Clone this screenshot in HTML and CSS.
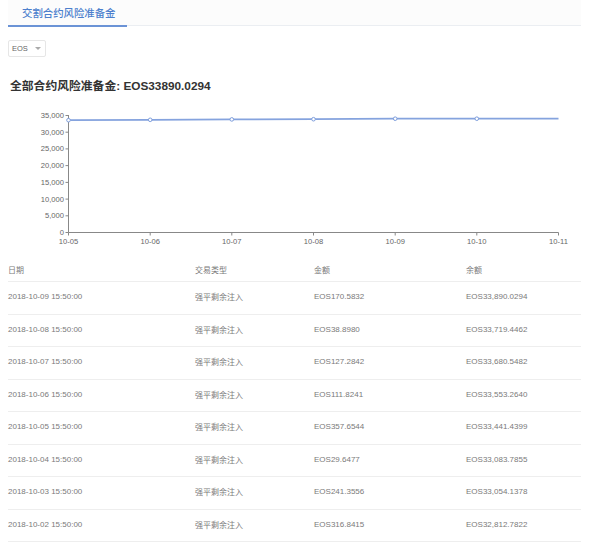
FILE: index.html
```html
<!DOCTYPE html>
<html>
<head>
<meta charset="utf-8">
<link rel="stylesheet" href="styles.css">
</head>
<body>
<div class="tabs">
  <div class="tab active">交割合约风险准备金</div>
</div>
<div class="select">
  <span>EOS</span>
  <span class="caret"></span>
</div>
<h2 class="title">全部合约风险准备金: EOS33890.0294</h2>
<svg class="chart" width="573" height="154" viewBox="0 -4 573 154">
  <g class="ylabels">
    <text x="56" y="18">35,000</text>
    <text x="56" y="34.7">30,000</text>
    <text x="56" y="51.4">25,000</text>
    <text x="56" y="68.1">20,000</text>
    <text x="56" y="84.9">15,000</text>
    <text x="56" y="101.6">10,000</text>
    <text x="56" y="118.3">5,000</text>
    <text x="56" y="135">0</text>
  </g>
  <g class="axis">
    <line x1="60.5" y1="15" x2="60.5" y2="132.5"/>
    <line x1="60.5" y1="132.5" x2="550.5" y2="132.5"/>
    <line x1="57.5" y1="15.5" x2="60.5" y2="15.5"/>
    <line x1="57.5" y1="32.2" x2="60.5" y2="32.2"/>
    <line x1="57.5" y1="48.9" x2="60.5" y2="48.9"/>
    <line x1="57.5" y1="65.6" x2="60.5" y2="65.6"/>
    <line x1="57.5" y1="82.4" x2="60.5" y2="82.4"/>
    <line x1="57.5" y1="99.1" x2="60.5" y2="99.1"/>
    <line x1="57.5" y1="115.8" x2="60.5" y2="115.8"/>
    <line x1="57.5" y1="132.5" x2="60.5" y2="132.5"/>
    <line x1="60.5" y1="132.5" x2="60.5" y2="135.5"/>
    <line x1="142.2" y1="132.5" x2="142.2" y2="135.5"/>
    <line x1="223.8" y1="132.5" x2="223.8" y2="135.5"/>
    <line x1="305.5" y1="132.5" x2="305.5" y2="135.5"/>
    <line x1="387.2" y1="132.5" x2="387.2" y2="135.5"/>
    <line x1="468.8" y1="132.5" x2="468.8" y2="135.5"/>
    <line x1="550.5" y1="132.5" x2="550.5" y2="135.5"/>
  </g>
  <g class="xlabels">
    <text x="60.5" y="144">10-05</text>
    <text x="142.2" y="144">10-06</text>
    <text x="223.8" y="144">10-07</text>
    <text x="305.5" y="144">10-08</text>
    <text x="387.2" y="144">10-09</text>
    <text x="468.8" y="144">10-10</text>
    <text x="550.5" y="144">10-11</text>
  </g>
  <polyline class="line" points="60.5,20.2 142.2,19.8 223.8,19.4 305.5,19.2 387.2,18.7 468.8,18.7 550.5,18.7"/>
  <g class="dots">
    <circle cx="60.5" cy="20.2" r="1.8"/>
    <circle cx="142.2" cy="19.8" r="1.8"/>
    <circle cx="223.8" cy="19.4" r="1.8"/>
    <circle cx="305.5" cy="19.2" r="1.8"/>
    <circle cx="387.2" cy="18.7" r="1.8"/>
    <circle cx="468.8" cy="18.7" r="1.8"/>
  </g>
</svg>
<div class="table">
  <div class="row head"><span>日期</span><span>交易类型</span><span>金额</span><span>余额</span></div>
  <div class="row"><span>2018-10-09 15:50:00</span><span class="cn">强平剩余注入</span><span>EOS170.5832</span><span>EOS33,890.0294</span></div>
  <div class="row"><span>2018-10-08 15:50:00</span><span class="cn">强平剩余注入</span><span>EOS38.8980</span><span>EOS33,719.4462</span></div>
  <div class="row"><span>2018-10-07 15:50:00</span><span class="cn">强平剩余注入</span><span>EOS127.2842</span><span>EOS33,680.5482</span></div>
  <div class="row"><span>2018-10-06 15:50:00</span><span class="cn">强平剩余注入</span><span>EOS111.8241</span><span>EOS33,553.2640</span></div>
  <div class="row"><span>2018-10-05 15:50:00</span><span class="cn">强平剩余注入</span><span>EOS357.6544</span><span>EOS33,441.4399</span></div>
  <div class="row"><span>2018-10-04 15:50:00</span><span class="cn">强平剩余注入</span><span>EOS29.6477</span><span>EOS33,083.7855</span></div>
  <div class="row"><span>2018-10-03 15:50:00</span><span class="cn">强平剩余注入</span><span>EOS241.3556</span><span>EOS33,054.1378</span></div>
  <div class="row"><span>2018-10-02 15:50:00</span><span class="cn">强平剩余注入</span><span>EOS316.8415</span><span>EOS32,812.7822</span></div>
</div>
</body>
</html>
```

FILE: styles.css
```css
html, body {
  margin: 0;
  background: #ffffff;
}
body {
  padding: 0 8px;
  font-family: "Liberation Sans", "Noto Sans CJK SC", sans-serif;
  color: #666;
}
.tabs {
  width: 573px;
  height: 25px;
  background: #fcfcfc;
  border-bottom: 1px solid #ebeef2;
  display: flex;
}
.tab {
  width: 119px;
  box-sizing: border-box;
  padding-left: 14px;
  font-family: "Noto Sans CJK SC", sans-serif;
  font-size: 10.4px;
  line-height: 25px;
  height: 25px;
  color: #4c7fcd;
  font-weight: 500;
}
.tab.active {
  border-bottom: 2px solid #6b93d6;
  height: 27px;
}
.select {
  margin-top: 14px;
  width: 38px;
  height: 17px;
  box-sizing: border-box;
  border: 1px solid #e6e6e6;
  border-radius: 2px;
  display: flex;
  align-items: center;
  justify-content: space-between;
  padding: 0 4px 0 3px;
  font-size: 7.5px;
  color: #666;
}
.caret {
  width: 0;
  height: 0;
  border-left: 3px solid transparent;
  border-right: 3px solid transparent;
  border-top: 3px solid #aaa;
}
.title {
  margin: 21px 0 0 2px;
  font-family: "Liberation Sans", "Noto Sans CJK SC", sans-serif;
  font-size: 11.8px;
  line-height: 16px;
  font-weight: bold;
  color: #333;
}
.chart {
  display: block;
  margin-top: 2px;
}
.chart text {
  font-family: "Liberation Sans", sans-serif;
  font-size: 7.6px;
  fill: #666;
}
.ylabels text { text-anchor: end; }
.xlabels text { text-anchor: middle; }
.axis line {
  stroke: #888;
  stroke-width: 1;
}
.line {
  fill: none;
  stroke: #85a3de;
  stroke-width: 1.8;
}
.dots circle {
  fill: #fff;
  stroke: #7d9ddc;
  stroke-width: 1;
}
.table {
  width: 573px;
}
.row {
  display: grid;
  grid-template-columns: 187px 119px 152px 1fr;
  height: 31.5px;
  box-sizing: content-box;
  align-items: center;
  border-bottom: 1px solid #eeeeee;
  font-size: 8px;
  color: #7a7a7a;
  padding-bottom: 0;
}
.row > span {
  margin-bottom: 2px;
}
.row.head {
  height: 31px;
  align-items: end;
}
.row.head > span {
  margin-bottom: 6px;
}
.cn {
  font-family: "Noto Sans CJK SC", sans-serif;
}
```
